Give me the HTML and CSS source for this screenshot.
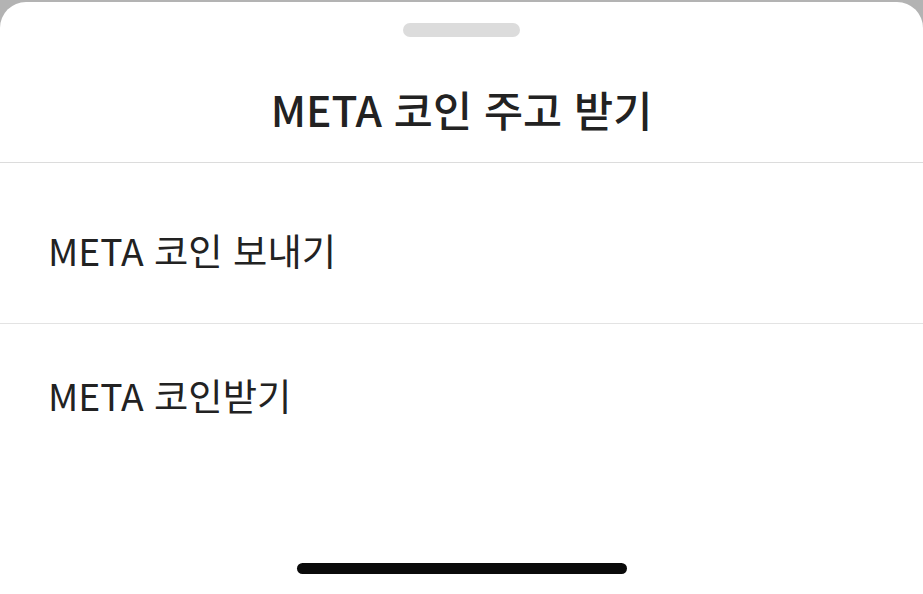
FILE: index.html
```html
<!DOCTYPE html>
<html lang="ko">
<head>
<meta charset="utf-8">
<title>META 코인 주고 받기</title>
<link rel="stylesheet" href="styles.css">
</head>
<body>
<div class="sheet">
  <div class="sheet-header">
    <div class="grabber"></div>
    <h1 class="title">META 코인 주고 받기</h1>
  </div>
  <div class="item item-first">META 코인 보내기</div>
  <div class="item item-second">META 코인받기</div>
  <div class="home-area">
    <div class="home-indicator"></div>
  </div>
</div>
</body>
</html>
```

FILE: styles.css
```css
html, body {
  margin: 0;
  padding: 0;
  height: 100%;
}

body {
  background: #b3b3b3;
  font-family: "Noto Sans CJK KR", "Noto Sans", sans-serif;
  color: #222;
  overflow: hidden;
}

.sheet {
  margin-top: 2px;
  height: calc(100% - 2px);
  background: #fff;
  border-radius: 26px 26px 0 0;
  display: flex;
  flex-direction: column;
}

.sheet-header {
  padding-top: 21px;
  height: 139px;
  border-bottom: 1px solid #dcdcdc;
  box-sizing: content-box;
}

.grabber {
  width: 117px;
  height: 14px;
  border-radius: 7px;
  background: #dcdcdc;
  margin: 0 auto;
}

.title {
  margin: 48px 0 0;
  font-size: 42.5px;
  font-weight: 500;
  line-height: 48px;
  text-align: center;
  color: #222;
}

.item {
  padding-left: 48px;
  font-size: 37.3px;
  line-height: 48px;
  color: #222;
}

.item-first {
  height: 161px;
  box-sizing: border-box;
  padding-top: 63px;
  border-bottom: 1px solid #e3e3e3;
}

.item-second {
  padding-top: 47px;
}

.home-area {
  margin-top: auto;
  display: flex;
  justify-content: center;
  padding-bottom: 20px;
}

.home-indicator {
  width: 330px;
  height: 11px;
  border-radius: 6px;
  background: #0a0a0a;
}
```
